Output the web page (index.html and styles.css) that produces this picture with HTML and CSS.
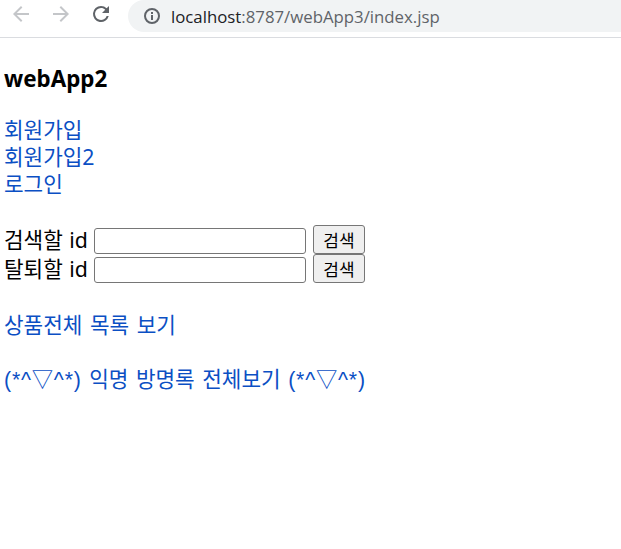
FILE: index.html
```html
<!DOCTYPE html>
<html lang="ko">
  <head>
    <meta charset="UTF-8" />
    <title>webApp2</title>
    <link rel="stylesheet" href="styles.css">
  </head>
  <body>
    <div class="toolbar">
      <svg class="nav-icon" viewBox="0 0 24 24" width="24" height="24"><path d="M20 11H7.8l5.6-5.6L12 4l-8 8 8 8 1.4-1.4L7.8 13H20z" fill="#c4c6c9"/></svg>
      <svg class="nav-icon" viewBox="0 0 24 24" width="24" height="24"><path d="M4 11h12.2l-5.6-5.6L12 4l8 8-8 8-1.4-1.4 5.6-5.6H4z" fill="#c4c6c9"/></svg>
      <svg class="nav-icon" viewBox="0 0 24 24" width="24" height="24"><path d="M17.65 6.35A7.96 7.96 0 0 0 12 4a8 8 0 1 0 7.74 10h-2.08A6 6 0 1 1 12 6c1.66 0 3.14.69 4.22 1.78L13 11h7V4z" fill="#5f6368"/></svg>
      <div class="address">
        <svg class="info-icon" viewBox="0 0 20 20" width="20" height="20"><circle cx="10" cy="10" r="7" fill="none" stroke="#5f6368" stroke-width="2"/><rect x="9" y="9" width="2" height="5" fill="#5f6368"/><rect x="9" y="6" width="2" height="2" fill="#5f6368"/></svg>
        <span class="url"><span class="host">localhost</span>:8787/webApp3/index.jsp</span>
      </div>
    </div>
    <div class="content">
      <h3>webApp2</h3>
      <div class="links">
        <a href="#">회원가입</a><br>
        <a href="#">회원가입2</a><br>
        <a href="#">로그인</a>
      </div>
      <form class="search-form">
        <div class="search-row">검색할 id <input type="text"> <input type="submit" value="검색"></div>
        <div class="search-row">탈퇴할 id <input type="text"> <input type="submit" value="검색"></div>
      </form>
      <p><a href="#">상품전체 목록 보기</a></p>
      <p><a href="#"><span class="face">(*^▽^*)</span> 익명 방명록 전체보기 <span class="face">(*^▽^*)</span></a></p>
    </div>
  </body>
</html>
```

FILE: styles.css
```css
body {
  margin: 0;
  background: #fff;
  color: #000;
  font-family: "Noto Sans", "Noto Sans CJK KR", sans-serif;
  font-size: 21.3px;
  line-height: 27px;
  word-spacing: 2px;
}
.toolbar {
  height: 37px;
  display: flex;
  align-items: flex-start;
  border-bottom: 1px solid #dadce0;
  overflow: hidden;
}
.nav-icon {
  flex: none;
  margin: 2px 0 0 9px;
}
.nav-icon + .nav-icon {
  margin-left: 16px;
}
.address {
  flex: 1;
  height: 32px;
  margin-left: 15px;
  padding-left: 14px;
  display: flex;
  align-items: center;
  gap: 9px;
  background: #f1f3f4;
  border-radius: 16px 0 0 16px;
}
.info-icon {
  flex: none;
}
.url {
  font-family: "Open Sans", "Liberation Sans", sans-serif;
  font-size: 16.8px;
  color: #5f6368;
  white-space: nowrap;
  word-spacing: 0;
}
.host {
  color: #202124;
}
.content {
  padding: 0 4px;
}
h3 {
  margin: 26px 0 23px;
  font-size: 22.4px;
  line-height: 29px;
}
a {
  color: #0b4fc4;
  text-decoration: none;
}
.face {
  font-family: "Liberation Sans", "Noto Sans CJK KR", sans-serif;
  letter-spacing: 0.8px;
}
.links {
  margin: 0 0 28px;
}
.search-form {
  margin: 0 0 28px;
}
.search-row {
  height: 29px;
  word-spacing: 1px;
}
input {
  font-family: "Noto Sans CJK KR", sans-serif;
  font-size: 17px;
  box-sizing: border-box;
  vertical-align: bottom;
  margin-bottom: -1px;
}
input[type="text"] {
  width: 212px;
  height: 26px;
  border: 1px solid #767676;
  border-radius: 3px;
  padding: 1px 2px;
  background: #fff;
}
input[type="submit"] {
  width: 52px;
  height: 29px;
  padding: 0;
  border: 1px solid #767676;
  border-radius: 3px;
  background: #efefef;
  color: #000;
}
p {
  margin: 27px 0;
}
```
